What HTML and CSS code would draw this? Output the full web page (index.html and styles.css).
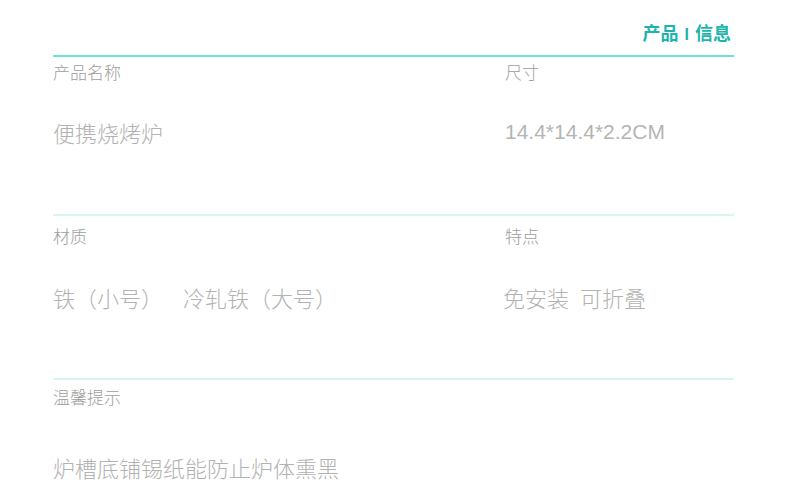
FILE: index.html
```html
<!DOCTYPE html>
<html lang="zh-CN">
<head>
<meta charset="utf-8">
<title>产品信息</title>
<link rel="stylesheet" href="styles.css">
</head>
<body>
<div class="sheet">
  <div class="header"><span class="title">产品<span class="sep">I</span>信息</span></div>
  <div class="row row-1 row-strong">
    <div class="cell">
      <div class="label">产品名称</div>
      <div class="value">便携烧烤炉</div>
    </div>
    <div class="cell">
      <div class="label">尺寸</div>
      <div class="value value-latin">14.4*14.4*2.2CM</div>
    </div>
  </div>
  <div class="row row-2">
    <div class="cell">
      <div class="label">材质</div>
      <div class="value"><span class="part">铁（小号）</span><span class="part">冷轧铁（大号）</span></div>
    </div>
    <div class="cell cell-shift">
      <div class="label label-shift">特点</div>
      <div class="value"><span class="part part-narrow">免安装</span><span>可折叠</span></div>
    </div>
  </div>
  <div class="row row-3">
    <div class="cell">
      <div class="label">温馨提示</div>
      <div class="value">炉槽底铺锡纸能防止炉体熏黑</div>
    </div>
  </div>
</div>
</body>
</html>
```

FILE: styles.css
```css
* { box-sizing: border-box; }
html, body { margin: 0; padding: 0; background: #ffffff; }
body {
  font-family: "Noto Sans CJK SC", "Noto Sans", sans-serif;
  width: 790px;
  height: 493px;
  overflow: hidden;
}
.sheet {
  margin-left: 53px;
  width: 681px;
}
.header {
  height: 55px;
  display: flex;
  justify-content: flex-end;
  padding-top: 20px;
  padding-right: 3px;
}
.title {
  font-size: 18px;
  line-height: 24px;
  font-weight: 700;
  color: #1cb5ac;
}
.sep {
  font-family: "Liberation Sans", Arial, sans-serif;
  font-size: 16px;
  font-weight: 700;
  margin: 0 6px;
}
.row {
  display: grid;
  grid-template-columns: 452px 1fr;
  border-top: 2px solid #d6f5f3;
}
.row-strong { border-top-color: #6edfd9; }
.row-1 { padding-top: 5px; height: 159px; }
.row-2 { padding-top: 10px; height: 164px; }
.row-3 { padding-top: 7px; height: 120px; }
.label {
  font-size: 17px;
  line-height: 20px;
  color: #9d9d9d;
  font-weight: 300;
}
.value {
  font-size: 22px;
  line-height: 30px;
  color: #b2b2b2;
  font-weight: 300;
  white-space: nowrap;
}
.row-1 .value { margin-top: 35px; }
.row-2 .value { margin-top: 36px; }
.row-3 .value { margin-top: 45px; }
.value-latin {
  font-family: "Liberation Sans", Arial, sans-serif;
  font-size: 21px;
  color: #b4b4b4;
}
.part { margin-right: 20px; }
.part-narrow { margin-right: 11px; }
.cell-shift .value { margin-left: -2px; }
```
